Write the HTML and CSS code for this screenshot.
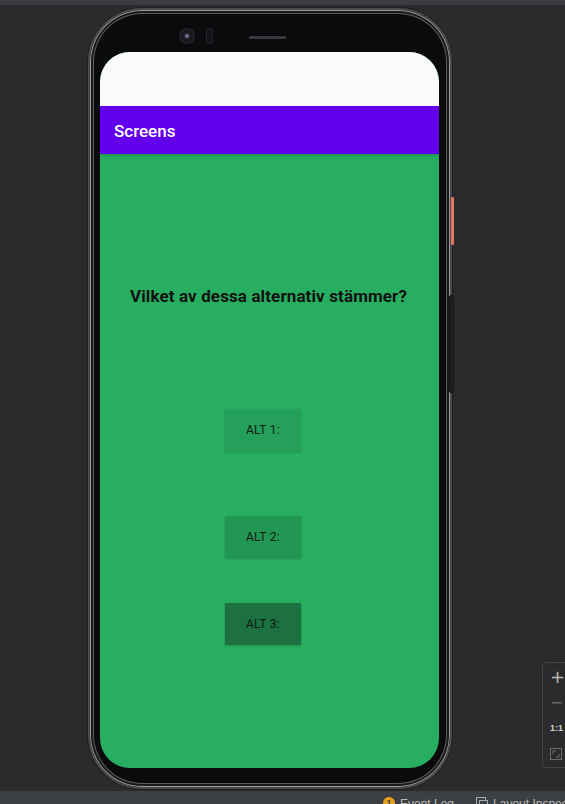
FILE: index.html
```html
<!DOCTYPE html>
<html>
<head>
<meta charset="utf-8">
<link rel="stylesheet" href="styles.css">
</head>
<body>
<div class="topstrip"></div>
<div class="workspace">
  <div class="phone">
    <div class="power"></div>
    <div class="volume"></div>
    <div class="camera"></div>
    <div class="sensor"></div>
    <div class="speaker"></div>
    <div class="screen">
      <div class="statusbar"></div>
      <div class="appbar">Screens</div>
      <div class="content">
        <div class="question">Vilket av dessa alternativ stämmer?</div>
        <div class="btn btn1">ALT 1:</div>
        <div class="btn btn2">ALT 2:</div>
        <div class="btn btn3">ALT 3:</div>
      </div>
    </div>
  </div>
  <div class="zoomctl">
    <div class="zi plus">+</div>
    <div class="zi minus">&#8722;</div>
    <div class="zi one">1:1</div>
    <div class="zi fit"><svg width="12" height="12" viewBox="0 0 12 12"><rect x="0.5" y="0.5" width="11" height="11" fill="none" stroke="#6a6a6a"/><path d="M3 6V3h3M9 6v3H6" fill="none" stroke="#6a6a6a"/></svg></div>
  </div>
</div>
<div class="bottombar">
  <div class="bitem"><span class="badge">1</span>Event Log</div>
  <div class="bitem"><svg class="licon" width="12" height="12" viewBox="0 0 12 12"><rect x="0.5" y="0.5" width="9" height="11" fill="none" stroke="#aaa"/><rect x="3.5" y="3.5" width="8" height="8" fill="#3c3f41" stroke="#aaa"/></svg>Layout Inspector</div>
</div>
</body>
</html>
```
FILE: styles.css
```css
html, body {
  margin: 0;
  padding: 0;
}
body {
  width: 565px;
  height: 804px;
  background: #2b2b2d;
  overflow: hidden;
  font-family: Roboto, "Noto Sans", sans-serif;
  display: flex;
  flex-direction: column;
}
.topstrip {
  height: 5px;
  background: #3a3d40;
  flex: none;
}
.workspace {
  flex: 1;
  position: relative;
  padding: 3px 0 0 88px;
}
.phone {
  position: relative;
  width: 339px;
  height: 716px;
  border-radius: 54px;
  background: #0b0a0d;
  border: 2px solid #4a4a4c;
  box-shadow: 0 0 0 1px #1e1e20, inset 0 0 0 1px #9a9a9c, inset 0 0 0 3px #1a1a1c, inset 0 0 0 4px #5c5c5e;
  padding: 42px 11px 19px 10px;
  box-sizing: content-box;
}
.power {
  position: absolute;
  right: -4px;
  top: 187px;
  width: 3px;
  height: 48px;
  background: #e07a5c;
  border-radius: 1px;
}
.volume {
  position: absolute;
  right: -4px;
  top: 285px;
  width: 3px;
  height: 96px;
  background: #202022;
  border: 1px solid #151517;
  border-radius: 2px;
}
.camera {
  position: absolute;
  left: 89px;
  top: 18px;
  width: 16px;
  height: 16px;
  border-radius: 50%;
  background: radial-gradient(circle at 50% 50%, #6b6b8a 0 1.5px, #202028 2.5px, #15151a 5px, #26262c 8px);
}
.sensor {
  position: absolute;
  left: 116px;
  top: 18px;
  width: 7px;
  height: 16px;
  border-radius: 4px;
  background: #141418;
  box-shadow: inset 0 0 0 1px #222228;
}
.speaker {
  position: absolute;
  left: 159px;
  top: 26px;
  width: 37px;
  height: 3px;
  border-radius: 1px;
  background: #3a3a3e;
}
.screen {
  width: 339px;
  height: 716px;
  border-radius: 30px;
  overflow: hidden;
  display: flex;
  flex-direction: column;
  background: #27ae60;
}
.statusbar {
  height: 54px;
  background: #fafafa;
  flex: none;
}
.appbar {
  height: 48px;
  background: #6200ee;
  color: #fff;
  font-size: 17px;
  font-weight: 500;
  line-height: 50px;
  padding-left: 14px;
  flex: none;
  box-shadow: 0 2px 3px rgba(0,0,0,0.15);
  position: relative;
}
.content {
  flex: 1;
  display: flex;
  flex-direction: column;
  align-items: center;
}
.question {
  margin-top: 130px;
  font-size: 17px;
  font-weight: 700;
  line-height: 24px;
  color: #111;
  letter-spacing: 0.12px;
  margin-right: 2px;
}
.btn {
  width: 76px;
  height: 42px;
  display: flex;
  align-items: center;
  justify-content: center;
  font-size: 12px;
  color: #0e1a12;
  letter-spacing: 0.3px;
  box-shadow: 0 1px 2px rgba(0,0,0,0.18);
  margin-right: 13px;
}
.btn1 {
  margin-top: 101px;
  background: #25a05a;
}
.btn2 {
  margin-top: 65px;
  background: #229653;
}
.btn3 {
  margin-top: 45px;
  background: #1d7040;
}
.zoomctl {
  position: absolute;
  left: 542px;
  top: 657px;
  width: 30px;
  height: 106px;
  border: 1px solid #434446;
  border-radius: 4px;
  background: #2b2b2d;
  display: flex;
  flex-direction: column;
  align-items: flex-start;
  padding-left: 7px;
  box-sizing: border-box;
}
.zi {
  height: 26px;
  display: flex;
  align-items: center;
  color: #b8b8b8;
  font-family: "DejaVu Sans", sans-serif;
}
.plus {
  font-size: 18px;
  margin-top: 1px;
}
.minus {
  font-size: 16px;
  color: #666;
}
.one {
  font-family: "Liberation Sans", Arial, sans-serif;
  font-size: 9px;
  font-weight: 700;
  color: #cfcfcf;
}
.bottombar {
  height: 13px;
  background: #3c3f41;
  flex: none;
  display: flex;
  justify-content: flex-start;
  gap: 22px;
  padding-left: 383px;
  overflow: hidden;
}
.bitem {
  color: #bbbbbb;
  font-family: "Liberation Sans", Arial, sans-serif;
  font-size: 12px;
  line-height: 12px;
  padding-top: 7px;
  display: flex;
  align-items: flex-start;
  gap: 5px;
  white-space: nowrap;
}
.badge {
  width: 12px;
  height: 12px;
  border-radius: 50%;
  background: #e8a21e;
  color: #3c3f41;
  font-size: 9px;
  font-weight: 700;
  line-height: 12px;
  text-align: center;
  margin-top: -1px;
}
.licon {
  margin-top: -1px;
}
```
